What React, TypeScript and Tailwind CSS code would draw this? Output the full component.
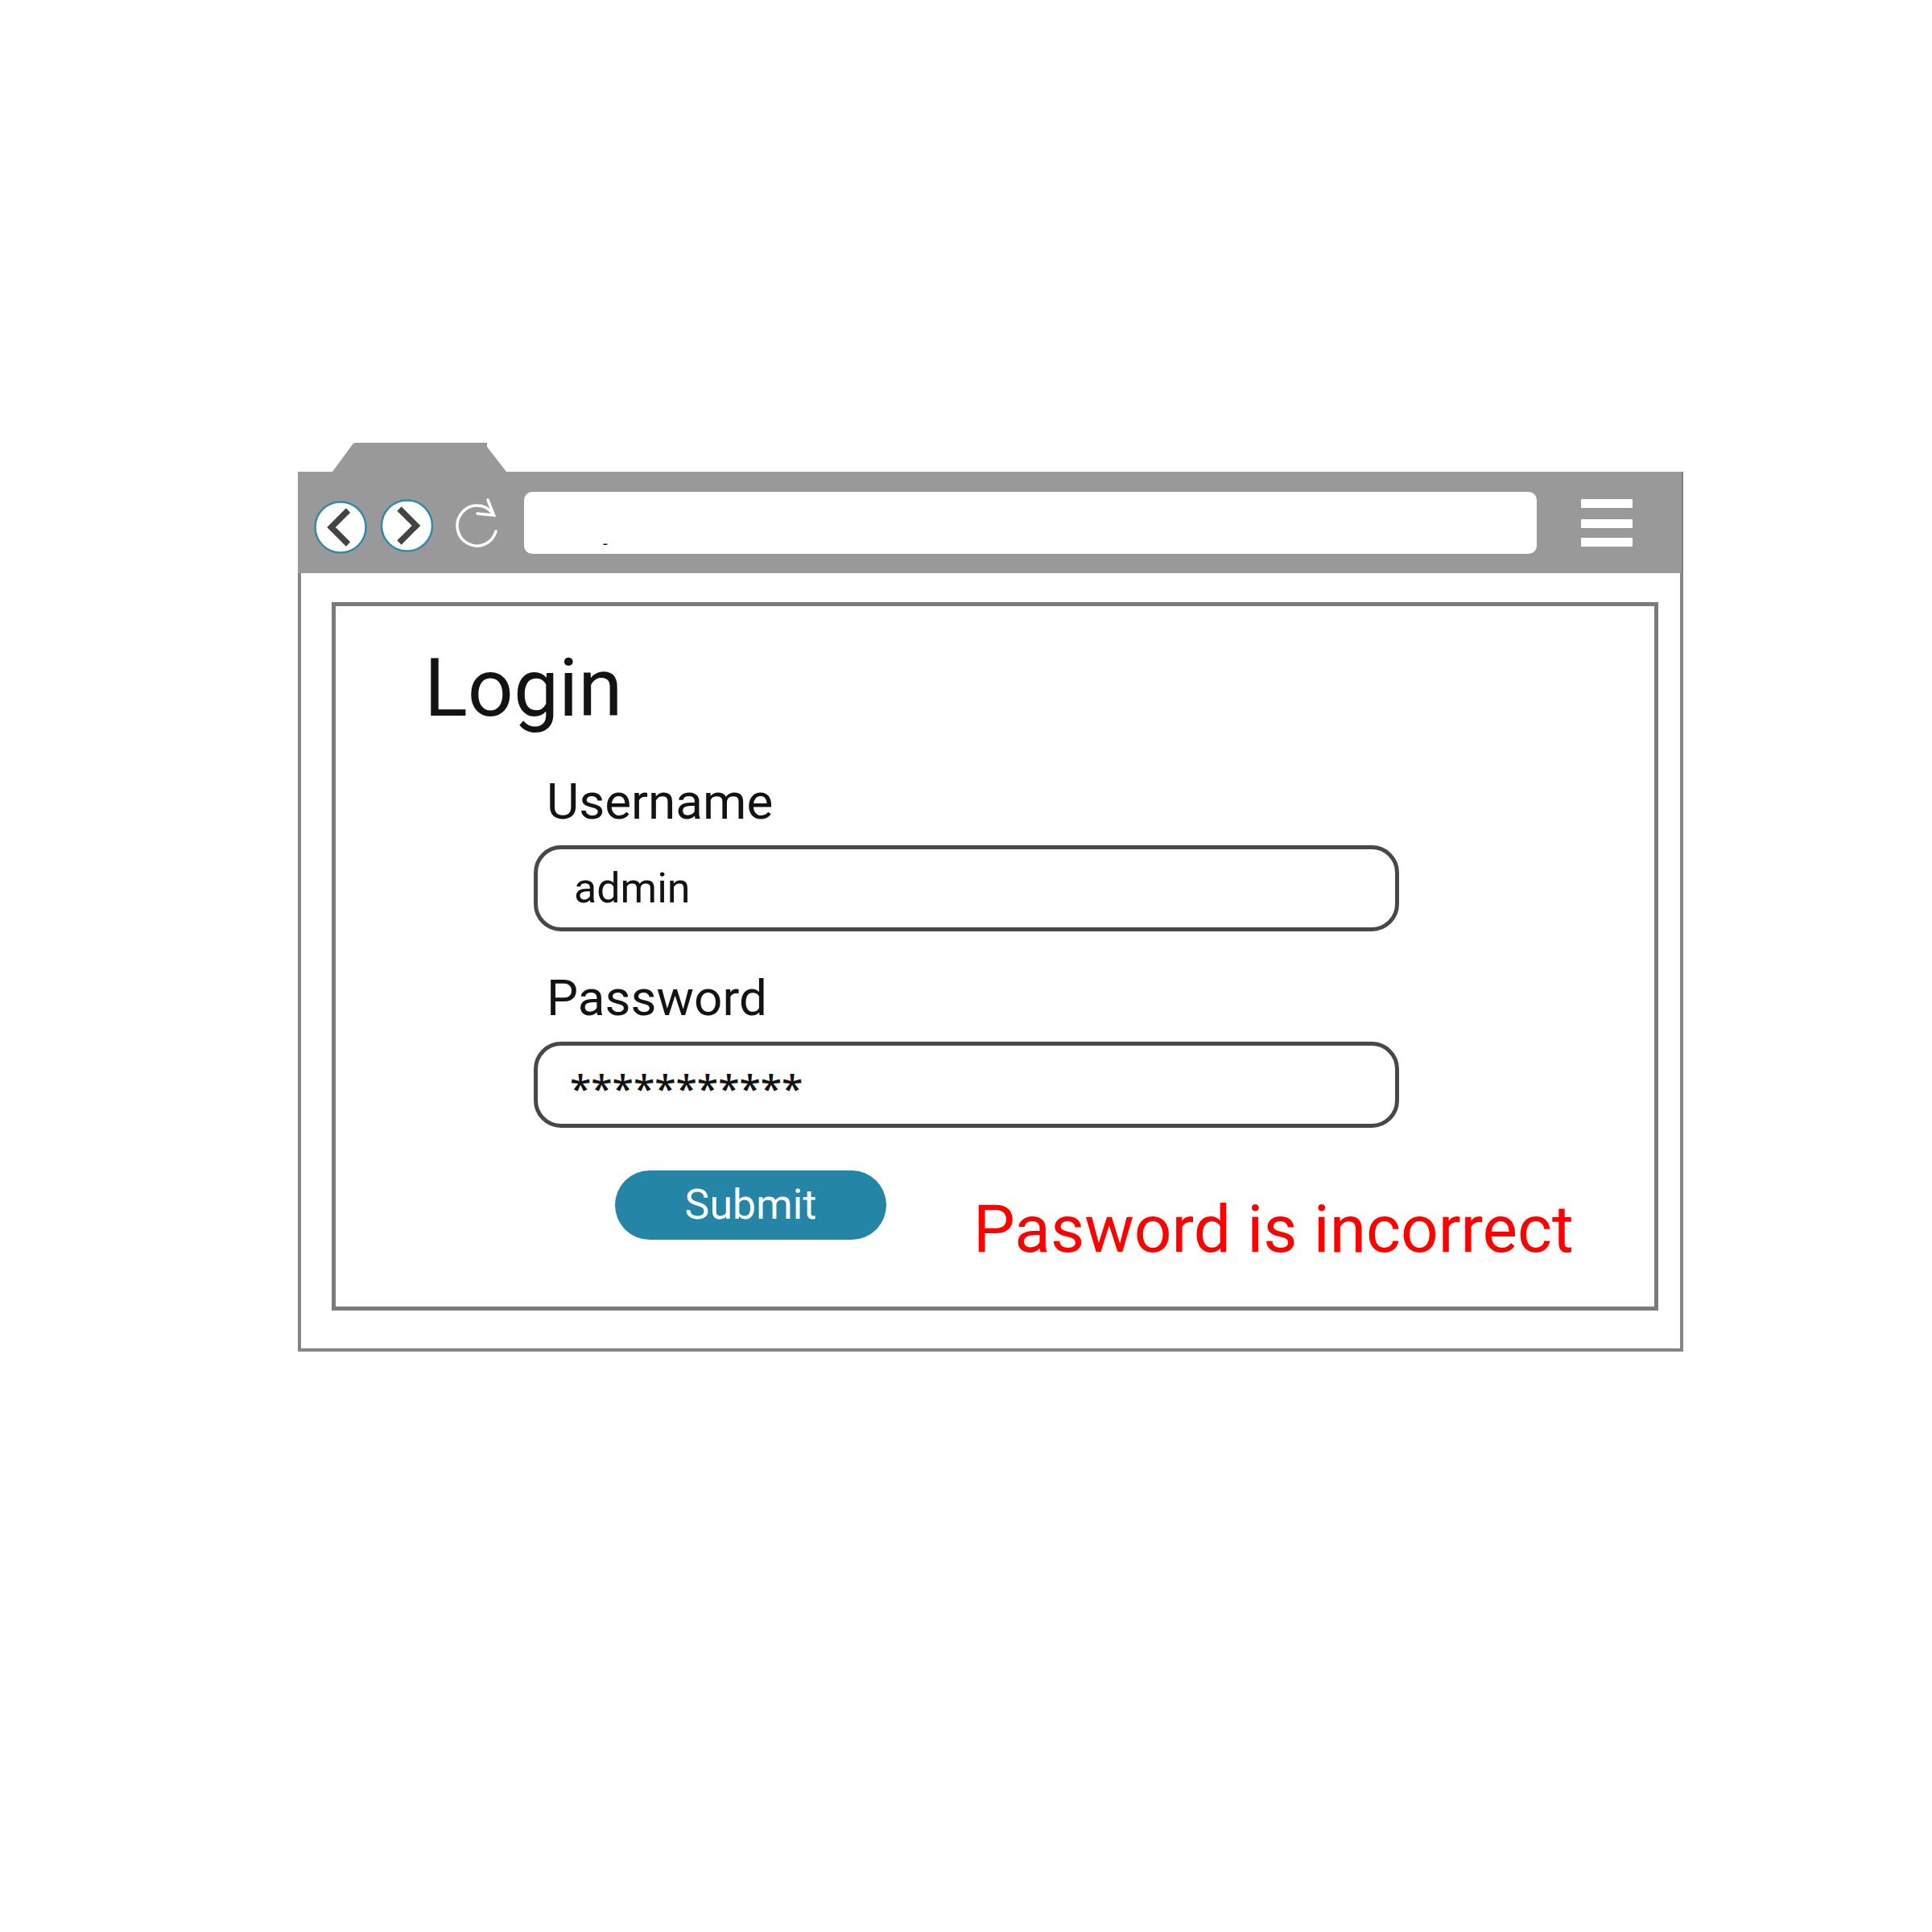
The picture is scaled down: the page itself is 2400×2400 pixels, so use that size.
import React from 'react';

interface FieldProps {
  id: string;
  label: string;
  value: string;
  inputClassName: string;
}

const Field: React.FC<FieldProps> = ({ id, label, value, inputClassName }) => {
  return (
    <div className="flex flex-col">
      <label htmlFor={id} className="pl-4 text-[62px] leading-[80px] text-[#131313]">{label}</label>
      <input
        id={id}
        type="text"
        defaultValue={value}
        className={`mt-[14px] h-[107px] w-full rounded-[34px] border-5 border-[#484848] bg-white text-[#131313] outline-none ${inputClassName}`}
      />
    </div>
  );
};

const Toolbar: React.FC = () => {
  return (
    <div className="flex h-[126px] items-center border-r-2 border-[#7f7f80] bg-[#999999] pl-5 pr-[61px]">
      <button type="button" aria-label="Back">
        <svg width="66" height="78" viewBox="0 0 66 78" fill="none">
          <circle cx="33" cy="45" r="31.5" fill="white" stroke="#3389a8" strokeWidth="2.500" />
          <path d="M42.500 24 L21.500 45 L42.500 66" stroke="#444444" strokeWidth="7.500" />
        </svg>
      </button>
      <button type="button" aria-label="Forward" className="ml-4">
        <svg width="66" height="78" viewBox="0 0 66 78" fill="none">
          <circle cx="33.5" cy="43" r="31.5" fill="white" stroke="#3389a8" strokeWidth="2.500" />
          <path d="M24 22 L45 43 L24 64" stroke="#444444" strokeWidth="7.500" />
        </svg>
      </button>
      <button type="button" aria-label="Reload" className="ml-7">
        <svg width="52" height="62" viewBox="0 0 52 62" fill="none" stroke="white" strokeWidth="3.500" strokeLinecap="round">
          <path d="M50 42 A24.500 25 0 1 1 46 20" />
          <path d="M40 3 L47.500 22 L27 20" />
        </svg>
      </button>
      <input
        type="text"
        aria-label="Address"
        defaultValue="-"
        className="ml-[33px] h-[77px] min-w-0 flex-1 rounded-[10px] bg-white pt-[52px] pl-[98px] text-[20px] leading-6 text-[#131313] outline-none"
      />
      <button type="button" aria-label="Menu" className="ml-[55px]">
        <svg width="64" height="60" viewBox="0 0 64 60" fill="white">
          <rect y="1" width="64" height="11" rx="1" />
          <rect y="26" width="64" height="11" rx="1" />
          <rect y="49" width="64" height="11" rx="1" />
        </svg>
      </button>
    </div>
  );
};

const App: React.FC = () => {
  return (
    <main className="min-h-screen bg-white pt-[550px] pb-20 pl-[370px] pr-[309px] font-['Roboto',sans-serif]">
      {/* Browser tab */}
      <svg className="ml-[43px] block" width="216" height="36" viewBox="0 0 216 36" fill="#999999">
        <path d="M0 36 L25 2 Q27 0 29 0 H192 V5 L216 36 Z" />
      </svg>
      <Toolbar />
      <div className="border-x-4 border-b-4 border-[#858487] pt-9 pr-[27px] pb-[47px] pl-[38px]">
        <section className="border-5 border-[#7b7a7d] pt-[42px] pr-[95px] pb-12 pl-[110px]">
          <h1 className="text-[100px] leading-[120px] text-[#131313]">Login</h1>
          <form className="pl-[136px]" onSubmit={(e) => e.preventDefault()}>
            <div className="mt-[41px] mr-[222px] flex flex-col gap-[43px]">
              <Field id="username" label="Username" value="admin" inputClassName="pl-[45px] text-[52px]" />
              <Field
                id="password"
                label="Password"
                value="***********"
                inputClassName="pt-2 pl-10 font-['Noto_Sans',sans-serif] text-[48px] font-medium"
              />
            </div>
            <div className="mt-[53px] flex items-start pl-[101px]">
              <button type="submit" className="h-[86px] w-[337px] shrink-0 rounded-full bg-[#2585a6] text-[52px] text-white">
                Submit
              </button>
              <p role="alert" className="ml-[108px] pt-[25px] text-[82px] leading-[96px] whitespace-nowrap text-[#ff0000]">
                Pasword is incorrect
              </p>
            </div>
          </form>
        </section>
      </div>
    </main>
  );
};

export default App;
